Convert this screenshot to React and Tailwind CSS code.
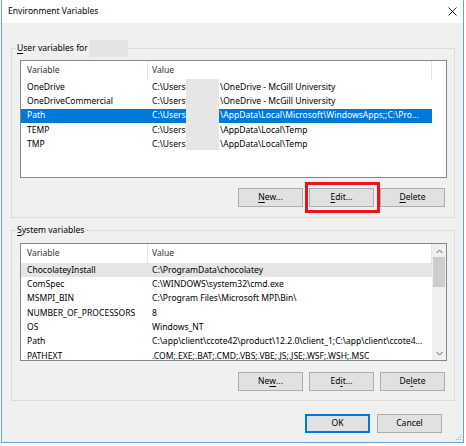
import React from 'react';

const userRows = [
  { name: 'OneDrive', rest: '\\OneDrive - McGill University' },
  { name: 'OneDriveCommercial', rest: '\\OneDrive - McGill University' },
  { name: 'Path', rest: '\\AppData\\Local\\Microsoft\\WindowsApps;;C:\\Pro...', selected: true },
  { name: 'TEMP', rest: '\\AppData\\Local\\Temp' },
  { name: 'TMP', rest: '\\AppData\\Local\\Temp' },
];

const systemRows = [
  { name: 'ChocolateyInstall', value: 'C:\\ProgramData\\chocolatey', selected: true },
  { name: 'ComSpec', value: 'C:\\WINDOWS\\system32\\cmd.exe' },
  { name: 'MSMPI_BIN', value: 'C:\\Program Files\\Microsoft MPI\\Bin\\' },
  { name: 'NUMBER_OF_PROCESSORS', value: '8' },
  { name: 'OS', value: 'Windows_NT' },
  { name: 'Path', value: 'C:\\app\\client\\ccote42\\product\\12.2.0\\client_1;C:\\app\\client\\ccote4...' },
  { name: 'PATHEXT', value: '.COM;.EXE;.BAT;.CMD;.VBS;.VBE;.JS;.JSE;.WSF;.WSH;.MSC' },
];

function Btn({ children, primary }) {
  return (
    <div
      className={`w-[65px] h-[19px] flex items-center justify-center bg-[#e1e1e1] text-black ${
        primary ? 'border-2 border-[#0078d7]' : 'border border-[#adadad]'
      }`}
    >
      {children}
    </div>
  );
}

function U({ children }) {
  return <span className="underline underline-offset-[1.5px] decoration-[0.8px]">{children}</span>;
}

function Header() {
  return (
    <div className="flex h-[19px] text-[#333]">
      <div className="w-[127px] pl-[6px] flex items-center border-r border-[#e5e5e5]">Variable</div>
      <div className="w-[284px] pl-[4px] flex items-center border-r border-[#e5e5e5]">Value</div>
    </div>
  );
}

function Row({ name, children, selected, light }) {
  const bg = selected ? (light ? 'bg-[#e5e5e5] text-black' : 'bg-[#0078d7] text-white') : 'text-black';
  return (
    <div className={`flex h-[14.33px] w-[411px] items-center whitespace-nowrap ${bg}`}>
      <div className="w-[127px] pl-[6px] shrink-0">{name}</div>
      <div className="pl-[4px]">{children}</div>
    </div>
  );
}

function Chevron({ down }) {
  return (
    <svg width="7" height="5" viewBox="0 0 7 5">
      <path
        d={down ? 'M0.5 1 L3.5 4 L6.5 1' : 'M0.5 4 L3.5 1 L6.5 4'}
        fill="none"
        stroke="#606060"
        strokeWidth="1"
      />
    </svg>
  );
}

function Group({ legend, extra, children, className }) {
  return (
    <div className={`relative w-[444px] border border-[#dcdcdc] pl-[8px] pr-[7px] ${className}`}>
      <div className="absolute -top-[9px] left-[4px] flex items-center bg-[#f0f0f0] px-px h-[17px]">
        <span>{legend}</span>
        {extra}
      </div>
      {children}
    </div>
  );
}

export default function App() {
  return (
    <div className="w-[466px] h-[446px] bg-white pl-px font-['Noto_Sans',sans-serif] text-[8.55px] leading-[11px]">
      <div className="relative w-[463px] h-[443px] border-x border-b border-[#65a3dd] bg-[#f0f0f0] flex flex-col">
        {/* Title bar */}
        <div className="h-[23px] bg-white flex items-center justify-between pl-[6px] pr-[6px] shrink-0">
          <span className="text-black">Environment Variables</span>
          <svg width="9" height="9" viewBox="0 0 9 9">
            <path d="M0.5 0.5 L8.5 8.5 M8.5 0.5 L0.5 8.5" stroke="#222" strokeWidth="1" />
          </svg>
        </div>

        {/* User variables */}
        <Group
          className="mt-[25px] ml-[9px] pt-[11px] pb-[10px]"
          legend={
            <>
              <U>U</U>ser variables for
            </>
          }
          extra={<span className="ml-[1px] w-[39px] h-[17px] bg-[#e4e4e4]" />}
        >
          <div className="relative w-[427px] h-[118px] border border-[#828790] bg-white overflow-hidden">
            <Header />
            {userRows.map((r) => (
              <Row key={r.name} name={r.name} selected={r.selected}>
                <span className="inline-block w-[68px]">C:\Users\</span>
                {r.rest}
              </Row>
            ))}
            <div className="absolute left-[165px] top-[18px] w-[33px] h-[71px] bg-[#e6e6e6]" />
          </div>
          <div className="relative flex justify-end gap-[6px] mt-[10px] pr-[2px]">
            <Btn>
              <U>N</U>ew...
            </Btn>
            <div className="relative">
              <Btn>
                <U>E</U>dit...
              </Btn>
              <div className="absolute -left-[4px] -top-[6px] w-[75px] h-[31px] border-[3px] border-[#e8141e]" />
            </div>
            <Btn>
              <U>D</U>elete
            </Btn>
          </div>
        </Group>

        {/* System variables */}
        <Group
          className="mt-[12px] ml-[9px] pt-[12px] pb-[9px]"
          legend={
            <>
              <U>S</U>ystem variables
            </>
          }
        >
          <div className="flex w-[427px] h-[118px] border border-[#828790] bg-white overflow-hidden">
            <div className="w-[411px]">
              <Header />
              {systemRows.map((r) => (
                <Row key={r.name} name={r.name} selected={r.selected} light>
                  {r.value}
                </Row>
              ))}
            </div>
            <div className="w-[14px] bg-[#f0f0f0] flex flex-col">
              <div className="h-[13px] flex items-center justify-center pt-[2px]">
                <Chevron />
              </div>
              <div className="mx-px h-[30px] bg-[#cdcdcd]" />
              <div className="flex-1" />
              <div className="h-[13px] flex items-center justify-center">
                <Chevron down />
              </div>
            </div>
          </div>
          <div className="flex justify-end gap-[6px] mt-[11px] pr-[2px]">
            <Btn>
              Ne<U>w</U>...
            </Btn>
            <Btn>
              Ed<U>i</U>t...
            </Btn>
            <Btn>
              De<U>l</U>ete
            </Btn>
          </div>
        </Group>

        {/* OK / Cancel */}
        <div className="flex justify-end gap-[7px] mt-[13px] mr-[21px]">
          <Btn primary>OK</Btn>
          <Btn>Cancel</Btn>
        </div>

        <svg className="absolute right-[1px] bottom-[1px]" width="7" height="7" viewBox="0 0 7 7">
          <rect x="5" y="1" width="1" height="1" fill="#b0b0b0" />
          <rect x="3" y="3" width="1" height="1" fill="#b0b0b0" />
          <rect x="5" y="3" width="1" height="1" fill="#b0b0b0" />
          <rect x="1" y="5" width="1" height="1" fill="#b0b0b0" />
          <rect x="3" y="5" width="1" height="1" fill="#b0b0b0" />
          <rect x="5" y="5" width="1" height="1" fill="#b0b0b0" />
        </svg>
      </div>
    </div>
  );
}
